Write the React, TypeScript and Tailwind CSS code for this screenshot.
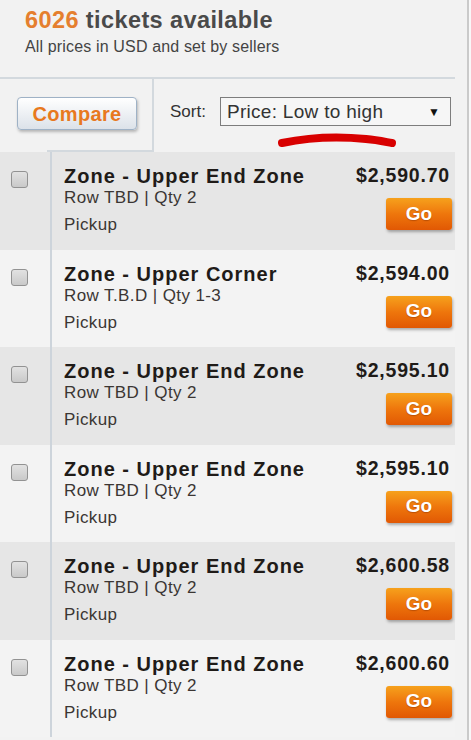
const LISTINGS = [
  { zone: 'Zone - Upper End Zone', row: 'Row TBD | Qty 2', price: '$2,590.70' },
  { zone: 'Zone - Upper Corner', row: 'Row T.B.D | Qty 1-3', price: '$2,594.00' },
  { zone: 'Zone - Upper End Zone', row: 'Row TBD | Qty 2', price: '$2,595.10' },
  { zone: 'Zone - Upper End Zone', row: 'Row TBD | Qty 2', price: '$2,595.10' },
  { zone: 'Zone - Upper End Zone', row: 'Row TBD | Qty 2', price: '$2,600.58' },
  { zone: 'Zone - Upper End Zone', row: 'Row TBD | Qty 2', price: '$2,600.60' },
];

interface Listing {
  zone: string;
  row: string;
  price: string;
}

function ListingRow({ item, shaded }: { item: Listing; shaded: boolean }) {
  return (
    <div className={`flex h-[97.5px] w-[455px] ${shaded ? 'bg-[#e6e6e6]' : 'bg-[#f3f3f3]'}`}>
      <div className="w-[50px] shrink-0 pl-[11px] pt-[19px]">
        <div className="w-[17px] h-[17px] rounded-[3px] border border-[#929292] bg-linear-to-b from-[#e2e2e2] to-[#c9c9c9]" />
      </div>
      <div className="flex-1 flex border-l-2 border-[#cdd4db] pl-[12px]">
        <div className="flex-1 flex flex-col">
          <p className="pt-[12px] text-[20px] leading-[24px] font-bold text-[#1f1b18] tracking-[1px]">{item.zone}</p>
          <p className="text-[17px] leading-[20px] text-[#3b3633] tracking-[0.4px]">{item.row}</p>
          <p className="mt-[7px] text-[17px] leading-[20px] text-[#3b3633] tracking-[0.4px]">Pickup</p>
        </div>
        <div className="flex flex-col items-end pr-[3px]">
          <p className="pt-[12px] mr-[2px] text-[19.5px] leading-[23px] font-bold text-[#1f1b18] tracking-[0.8px]">{item.price}</p>
          <button className="mt-[11px] w-[66px] h-[32px] rounded-[3px] bg-linear-to-b from-[#f6a11c] via-[#ee760c] to-[#e15804] text-white text-[19px] font-bold shadow-[1px_2px_3px_rgba(0,0,0,0.3)] [text-shadow:0_1px_1px_rgba(120,40,0,0.4)]">
            Go
          </button>
        </div>
      </div>
    </div>
  );
}

export default function App() {
  return (
    <div className="relative w-[471px] h-[740px] overflow-hidden flex bg-[#f2f2f2] font-['Liberation_Sans',Arial,sans-serif]">
      <div className="w-[469px] shrink-0 border-r-2 border-[#cacaca] flex flex-col">
        <div className="w-[455px] h-[79px] shrink-0 border-b-2 border-[#d3d9de] pl-[25px] pt-[6px]">
          <h1 className="text-[23.5px] leading-[28px] font-bold text-[#4a4a4a] tracking-[0.4px]">
            <span className="text-[#e57f2f]">6026</span> tickets available
          </h1>
          <p className="mt-[3px] text-[16px] leading-[20px] text-[#444] tracking-[0.15px]">All prices in USD and set by sellers</p>
        </div>

        <div className="flex h-[73px] w-[455px] shrink-0">
          <div className="w-[154px] shrink-0 flex flex-col border-r-2 border-[#d3d9de]">
            <div className="pl-[17px] pt-[18px]">
              <button className="w-[120px] h-[33px] rounded-[4px] border border-[#9fb2c6] bg-linear-to-b from-white to-[#dce2e9] shadow-[1px_2px_3px_rgba(0,0,0,0.25)] text-[20px] font-bold text-[#e8791e] tracking-[0.3px]">
                Compare
              </button>
            </div>
            <div className="mt-auto ml-[47px] h-[2px] bg-[#d3d9de]" />
          </div>
          <div className="flex-1 flex items-start pt-[18px] pl-[16px]">
            <span className="mt-[4px] text-[17px] leading-[22px] text-[#333]">Sort:</span>
            <div className="ml-[14px] w-[231px] h-[29px] border border-[#7d7d7d] bg-[#f6f6f6] flex items-center pl-[6px] pr-[10px]">
              <span className="flex-1 text-[19px] leading-[22px] text-[#333] tracking-[0.3px]">Price: Low to high</span>
              <span className="text-[12px] text-[#111]">▼</span>
            </div>
          </div>
        </div>

        <div className="flex flex-col">
          {LISTINGS.map((item, i) => (
            <ListingRow key={i} item={item} shaded={i % 2 === 0} />
          ))}
        </div>
      </div>
      <div className="flex-1 bg-[#f8f8f8]" />

      <svg className="absolute left-[276px] top-[130px]" width="124" height="22" viewBox="0 0 124 22">
        <path d="M6 13 C 30 8, 60 6, 90 9 C 102 10, 110 12, 116 13" stroke="#d80000" strokeWidth="8" strokeLinecap="round" fill="none" />
      </svg>
    </div>
  );
}
